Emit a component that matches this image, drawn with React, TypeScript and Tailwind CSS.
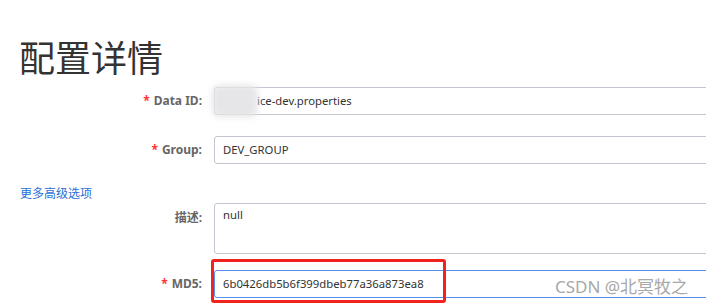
import React from "react";

const font = { fontFamily: '"Noto Sans", "Noto Sans CJK SC", sans-serif' };

function Label({ text, required }: { text: string; required?: boolean }) {
  return (
    <div className="w-[202px] shrink-0 pr-[12px] text-right text-[12px] font-bold text-[#666]">
      {required && <span className="mr-[4px] text-[#ff3434]">*</span>}
      {text}
    </div>
  );
}

export default function App() {
  return (
    <div className="relative h-[305px] w-[706px] overflow-hidden bg-white" style={font}>
      <h1 className="ml-[19px] pt-[38px] text-[36px] leading-[42px] font-normal text-[#333]">配置详情</h1>

      <div className="mt-[7px] flex items-center">
        <div className="w-[214px] shrink-0 flex justify-end">
          <Label text="Data ID:" required />
        </div>
        <div className="relative h-[28px] w-[560px] shrink-0 rounded-[3px] border border-[#c4c6cf] pl-[42px] text-[11.3px] leading-[26px] text-[#333]">
          ice-dev.properties
          <div className="absolute left-[-3px] top-[-3px] h-[32px] w-[46px] rounded-[8px] bg-[#e6e6e8] blur-[3px]" />
        </div>
      </div>

      <div className="mt-[21px] flex items-center">
        <div className="w-[214px] shrink-0 flex justify-end">
          <Label text="Group:" required />
        </div>
        <div className="h-[28px] w-[560px] shrink-0 rounded-[3px] border border-[#c4c6cf] pl-[8px] text-[11.3px] leading-[26px] text-[#333]">
          DEV_GROUP
        </div>
      </div>

      <div className="ml-[20px] mt-[22px] text-[12px] leading-[16px] text-[#2a6fd6]">更多高级选项</div>

      <div className="mt-[1px] flex items-start">
        <div className="w-[214px] shrink-0 flex justify-end pt-[6px]">
          <Label text="描述:" />
        </div>
        <div className="h-[51px] w-[560px] shrink-0 rounded-[3px] border border-[#c4c6cf] pl-[8px] pt-[2px] text-[11.3px] leading-[18px] text-[#333]">
          null
        </div>
      </div>

      <div className="mt-[16px] flex items-center">
        <div className="w-[214px] shrink-0 flex justify-end">
          <Label text="MD5:" required />
        </div>
        <div className="h-[28px] w-[560px] shrink-0 rounded-[3px] border border-[#5b8def] pl-[8px] text-[11.3px] leading-[26px] text-[#333]">
          6b0426db5b6f399dbeb77a36a873ea8
        </div>
      </div>

      <div className="absolute left-[211px] top-[259px] h-[44px] w-[235px] rounded-[3px] border-[3px] border-[#f2231f]" />

      <div className="absolute left-[555px] top-[276px] text-[17px] leading-[22px] text-[#a8a8a8]">CSDN @北冥牧之</div>
    </div>
  );
}
